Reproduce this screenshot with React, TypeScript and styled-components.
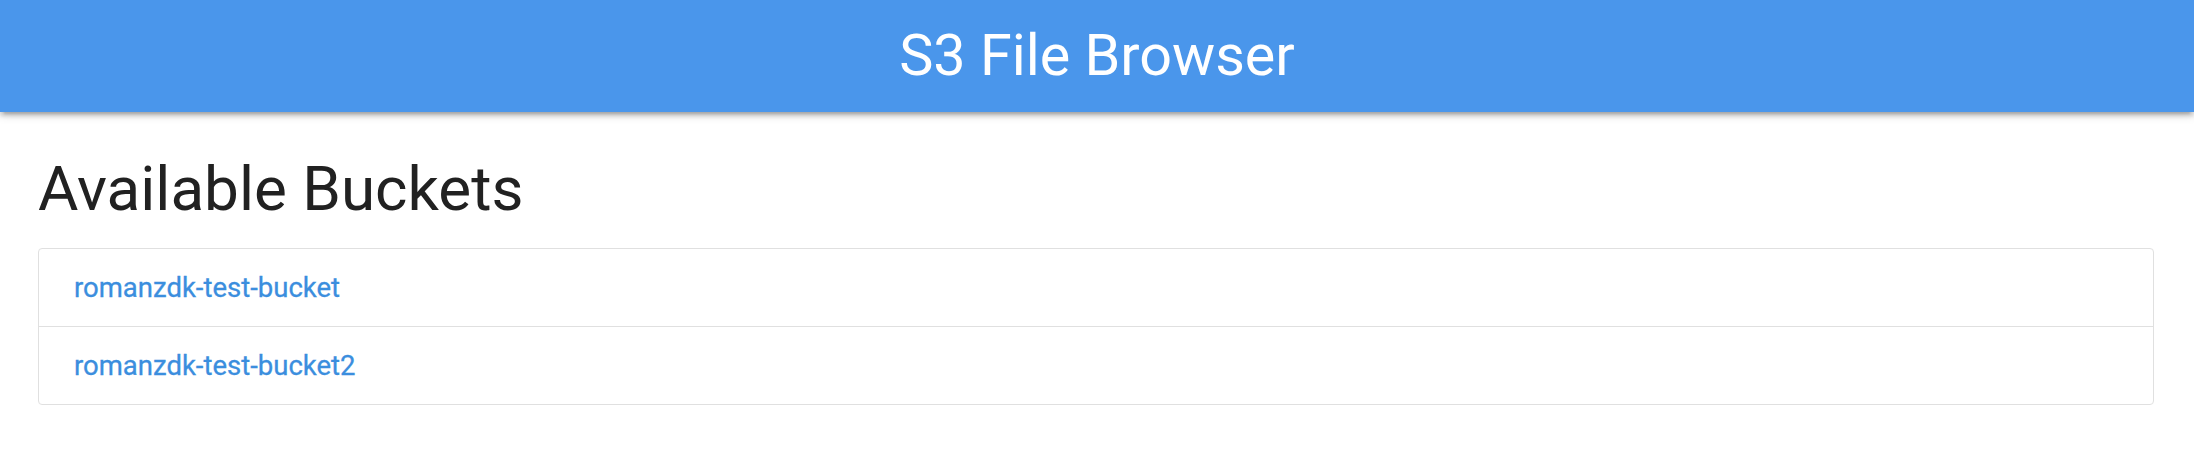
import React from "react";
import styled, { createGlobalStyle } from "styled-components";

const GlobalStyle = createGlobalStyle`
  html, body {
    margin: 0;
    padding: 0;
    background: #ffffff;
    font-family: Roboto, "Liberation Sans", sans-serif;
  }
  * { box-sizing: border-box; }
`;

const NavBar = styled.header`
  height: 112px;
  background: #4a96eb;
  display: flex;
  align-items: center;
  justify-content: center;
  box-shadow: 0 4px 4px 0 rgba(0, 0, 0, 0.14), 0 6px 2px -4px rgba(0, 0, 0, 0.12),
    0 2px 10px 0 rgba(0, 0, 0, 0.2);
  position: relative;
  z-index: 1;
`;

const Brand = styled.h1`
  margin: 0;
  font-size: 57.5px;
  font-weight: 400;
  color: #ffffff;
  line-height: 112px;
`;

const Main = styled.main`
  padding: 0 40px 0 38px;
`;

const Heading = styled.h4`
  margin: 43px 0 25px;
  font-size: 62px;
  font-weight: 400;
  line-height: 1.1;
  color: #212121;
`;

const Collection = styled.ul`
  list-style: none;
  margin: 0;
  padding: 0;
  border: 1px solid #e0e0e0;
  border-radius: 4px;
  overflow: hidden;
`;

const Item = styled.li`
  height: 77px;
  display: flex;
  align-items: center;
  padding-left: 35px;
  border-bottom: 1px solid #e0e0e0;
  box-sizing: content-box;
  &:last-child {
    border-bottom: none;
  }
`;

const BucketLink = styled.a`
  font-size: 27.5px;
  line-height: 42px;
  color: #3b8ede;
  text-decoration: none;
  -webkit-text-stroke: 0.3px #3b8ede;
`;

const buckets = ["romanzdk-test-bucket", "romanzdk-test-bucket2"];

export default function App() {
  return (
    <>
      <GlobalStyle />
      <NavBar>
        <Brand>S3 File Browser</Brand>
      </NavBar>
      <Main>
        <Heading>Available Buckets</Heading>
        <Collection>
          {buckets.map((b) => (
            <Item key={b}>
              <BucketLink href="#">{b}</BucketLink>
            </Item>
          ))}
        </Collection>
      </Main>
    </>
  );
}
